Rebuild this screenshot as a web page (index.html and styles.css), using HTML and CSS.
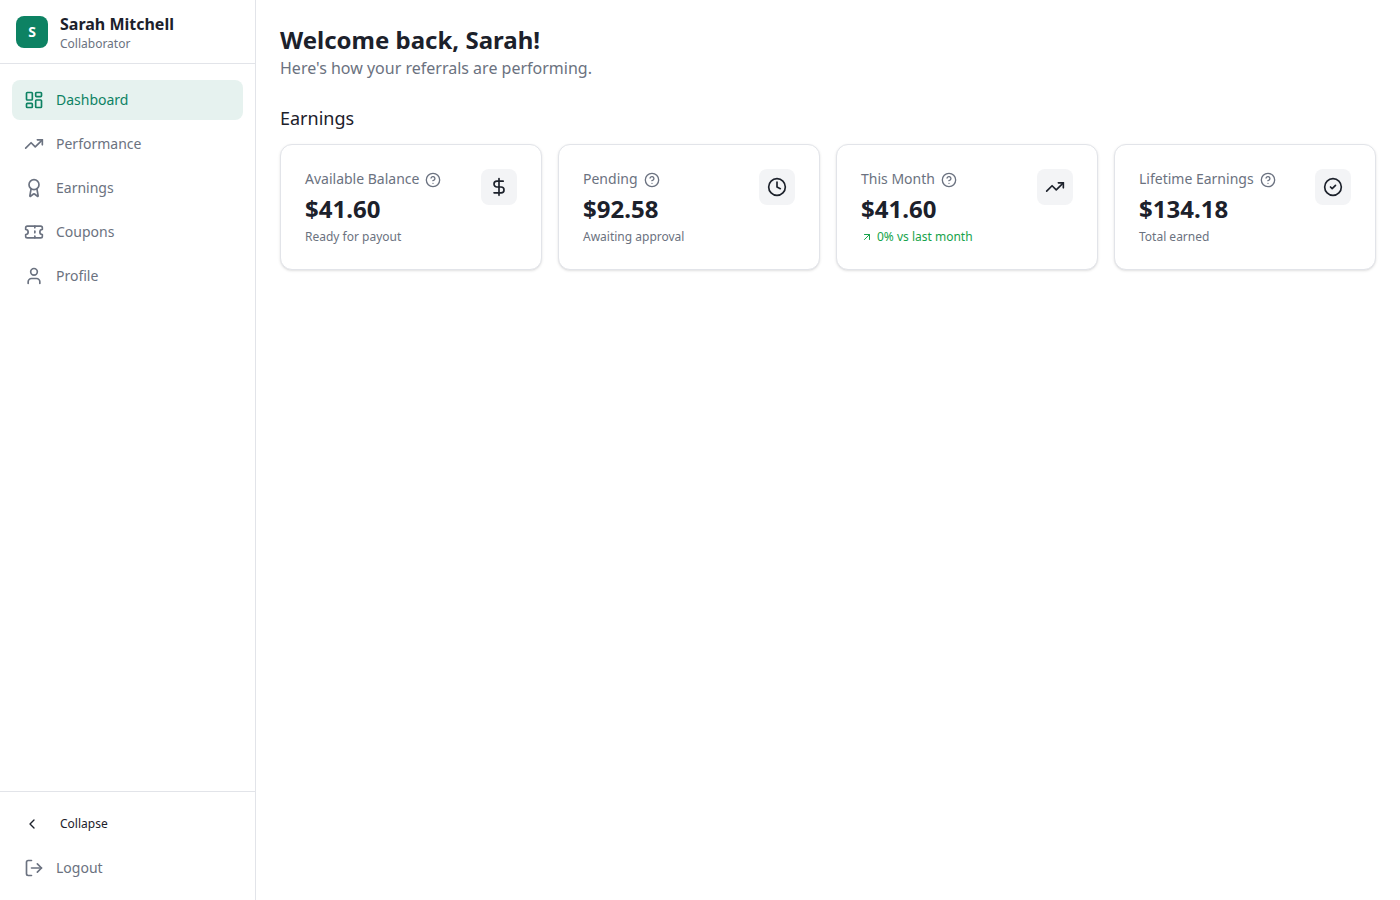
FILE: index.html
```html
<!DOCTYPE html>
<html lang="en">
<head>
<meta charset="utf-8">
<meta name="viewport" content="width=device-width, initial-scale=1">
<title>Dashboard</title>
<link rel="stylesheet" href="styles.css">
</head>
<body>
<svg class="defs" aria-hidden="true">
  <symbol id="help" viewBox="0 0 24 24"><circle cx="12" cy="12" r="10"/><path d="M9.09 9a3 3 0 0 1 5.83 1c0 2-3 3-3 3"/><path d="M12 17h.01"/></symbol>
  <symbol id="trend" viewBox="0 0 24 24"><path d="m22 7-8.5 8.5-5-5L2 17"/><path d="M16 7h6v6"/></symbol>
</svg>
<div class="app">
  <aside class="sidebar">
    <header class="account">
      <span class="avatar">S</span>
      <div class="account-text">
        <span class="account-name">Sarah Mitchell</span>
        <span class="account-role">Collaborator</span>
      </div>
    </header>
    <nav class="nav" aria-label="Main">
      <a class="nav-item active" href="#dashboard" aria-current="page">
        <svg class="icon" viewBox="0 0 24 24"><rect width="7" height="9" x="3" y="3" rx="1"/><rect width="7" height="5" x="14" y="3" rx="1"/><rect width="7" height="9" x="14" y="12" rx="1"/><rect width="7" height="5" x="3" y="16" rx="1"/></svg>
        <span>Dashboard</span>
      </a>
      <a class="nav-item" href="#performance">
        <svg class="icon"><use href="#trend"/></svg>
        <span>Performance</span>
      </a>
      <a class="nav-item" href="#earnings">
        <svg class="icon" viewBox="0 0 24 24"><path d="m15.477 12.89 1.515 8.526a.5.5 0 0 1-.81.47l-3.58-2.687a1 1 0 0 0-1.197 0l-3.586 2.686a.5.5 0 0 1-.81-.469l1.514-8.526"/><circle cx="12" cy="8" r="6"/></svg>
        <span>Earnings</span>
      </a>
      <a class="nav-item" href="#coupons">
        <svg class="icon" viewBox="0 0 24 24"><path d="M2 9a3 3 0 0 1 0 6v2a2 2 0 0 0 2 2h16a2 2 0 0 0 2-2v-2a3 3 0 0 1 0-6V7a2 2 0 0 0-2-2H4a2 2 0 0 0-2 2Z"/><path d="M13 5v2"/><path d="M13 17v2"/><path d="M13 11v2"/></svg>
        <span>Coupons</span>
      </a>
      <a class="nav-item" href="#profile">
        <svg class="icon" viewBox="0 0 24 24"><path d="M19 21v-2a4 4 0 0 0-4-4H9a4 4 0 0 0-4 4v2"/><circle cx="12" cy="7" r="4"/></svg>
        <span>Profile</span>
      </a>
    </nav>
    <footer class="sidebar-footer">
      <button class="collapse" type="button">
        <svg class="icon small" viewBox="0 0 24 24"><path d="m15 18-6-6 6-6"/></svg>
        <span>Collapse</span>
      </button>
      <button class="nav-item" type="button">
        <svg class="icon" viewBox="0 0 24 24"><path d="m16 17 5-5-5-5"/><path d="M21 12H9"/><path d="M9 21H5a2 2 0 0 1-2-2V5a2 2 0 0 1 2-2h4"/></svg>
        <span>Logout</span>
      </button>
    </footer>
  </aside>
  <main class="main">
    <header class="intro">
      <h1>Welcome back, Sarah!</h1>
      <p>Here's how your referrals are performing.</p>
    </header>
    <section class="earnings">
      <h2>Earnings</h2>
      <div class="cards">
        <article class="card">
          <div class="card-body">
            <div class="card-label"><h3>Available Balance</h3><button class="help" type="button" aria-label="About available balance"><svg class="icon small"><use href="#help"/></svg></button></div>
            <p class="amount">$41.60</p>
            <p class="note">Ready for payout</p>
          </div>
          <span class="tile"><svg class="icon" viewBox="0 0 24 24"><path d="M12 2v20"/><path d="M17 5H9.5a3.5 3.5 0 0 0 0 7h5a3.5 3.5 0 0 1 0 7H6"/></svg></span>
        </article>
        <article class="card">
          <div class="card-body">
            <div class="card-label"><h3>Pending</h3><button class="help" type="button" aria-label="About pending"><svg class="icon small"><use href="#help"/></svg></button></div>
            <p class="amount">$92.58</p>
            <p class="note">Awaiting approval</p>
          </div>
          <span class="tile"><svg class="icon" viewBox="0 0 24 24"><circle cx="12" cy="12" r="10"/><path d="M12 6v6l4 2"/></svg></span>
        </article>
        <article class="card">
          <div class="card-body">
            <div class="card-label"><h3>This Month</h3><button class="help" type="button" aria-label="About this month"><svg class="icon small"><use href="#help"/></svg></button></div>
            <p class="amount">$41.60</p>
            <p class="note change"><svg class="icon tiny" viewBox="0 0 24 24"><path d="M7 7h10v10"/><path d="M7 17 17 7"/></svg><span>0% vs last month</span></p>
          </div>
          <span class="tile"><svg class="icon"><use href="#trend"/></svg></span>
        </article>
        <article class="card">
          <div class="card-body">
            <div class="card-label"><h3>Lifetime Earnings</h3><button class="help" type="button" aria-label="About lifetime earnings"><svg class="icon small"><use href="#help"/></svg></button></div>
            <p class="amount">$134.18</p>
            <p class="note">Total earned</p>
          </div>
          <span class="tile"><svg class="icon" viewBox="0 0 24 24"><circle cx="12" cy="12" r="10"/><path d="m9 12 2 2 4-4"/></svg></span>
        </article>
      </div>
    </section>
  </main>
</div>
</body>
</html>
```

FILE: styles.css
```css
:root {
  --ink: #1c212b;
  --muted: #6b7280;
  --line: #e2e4e9;
  --brand: #0d8263;
}

* {
  box-sizing: border-box;
}

body {
  margin: 0;
  background: #fff;
  color: var(--ink);
  font: 400 16px/24px "Noto Sans", sans-serif;
}

h1, h2, h3, p {
  margin: 0;
}

button {
  border: 0;
  padding: 0;
  background: none;
  color: inherit;
  font: inherit;
  cursor: pointer;
}

.defs {
  display: none;
}

.icon {
  display: block;
  flex: none;
  width: 20px;
  height: 20px;
  fill: none;
  stroke: currentColor;
  stroke-width: 2;
  stroke-linecap: round;
  stroke-linejoin: round;
}

.icon.small {
  width: 16px;
  height: 16px;
}

.icon.tiny {
  width: 12px;
  height: 12px;
}

.app {
  display: flex;
  min-height: 100vh;
}

.sidebar {
  display: flex;
  flex: none;
  flex-direction: column;
  width: 256px;
  border-right: 1px solid var(--line);
}

.account {
  display: flex;
  align-items: center;
  gap: 12px;
  height: 64px;
  padding: 0 16px;
  border-bottom: 1px solid var(--line);
}

.avatar {
  display: grid;
  place-items: center;
  width: 32px;
  height: 32px;
  border-radius: 8px;
  background: var(--brand);
  color: #fff;
  font-size: 14px;
  font-weight: 700;
  line-height: 20px;
}

.account-text {
  display: flex;
  flex-direction: column;
}

.account-name {
  font-weight: 700;
  line-height: 24px;
}

.account-role {
  color: var(--muted);
  font-size: 12px;
  line-height: 16px;
}

.nav {
  display: flex;
  flex: 1;
  flex-direction: column;
  gap: 4px;
  padding: 16px 12px;
}

.nav-item {
  display: flex;
  align-items: center;
  gap: 12px;
  padding: 10px 12px;
  border-radius: 8px;
  color: var(--muted);
  font-size: 14px;
  font-weight: 400;
  line-height: 20px;
  text-decoration: none;
}

.nav-item.active {
  background: #e6f2ef;
  color: var(--brand);
}

.sidebar-footer {
  display: flex;
  flex-direction: column;
  gap: 8px;
  padding: 16px 12px 12px;
  border-top: 1px solid var(--line);
}

.collapse {
  display: flex;
  align-items: center;
  gap: 20px;
  padding: 8px 12px;
  font-size: 12px;
  line-height: 16px;
}

.main {
  flex: 1;
  min-width: 0;
  padding: 24px;
}

.intro {
  margin-bottom: 24px;
}

h1 {
  font-size: 24px;
  font-weight: 700;
  line-height: 32px;
}

.intro p {
  color: var(--muted);
}

h2 {
  margin-bottom: 12px;
  font-size: 18px;
  font-weight: 400;
  line-height: 28px;
}

.cards {
  display: grid;
  grid-template-columns: repeat(auto-fit, minmax(240px, 1fr));
  gap: 16px;
}

.card {
  display: flex;
  align-items: flex-start;
  justify-content: space-between;
  padding: 24px;
  border: 1px solid var(--line);
  border-radius: 12px;
  background: #fff;
  box-shadow: 0 1px 3px rgb(0 0 0 / 10%), 0 1px 2px -1px rgb(0 0 0 / 10%);
}

.card-label {
  display: flex;
  align-items: flex-end;
  gap: 6px;
  color: var(--muted);
}

.help {
  padding-bottom: 1px;
}

h3 {
  font-size: 14px;
  font-weight: 400;
  line-height: 20px;
}

.amount {
  margin: 4px 0;
  font-size: 24px;
  font-weight: 700;
  line-height: 32px;
}

.note {
  color: var(--muted);
  font-size: 12px;
  line-height: 16px;
}

.note.change {
  display: flex;
  align-items: center;
  gap: 4px;
  color: #16a34a;
}

.tile {
  padding: 8px;
  border-radius: 8px;
  background: #f3f4f6;
}
```
